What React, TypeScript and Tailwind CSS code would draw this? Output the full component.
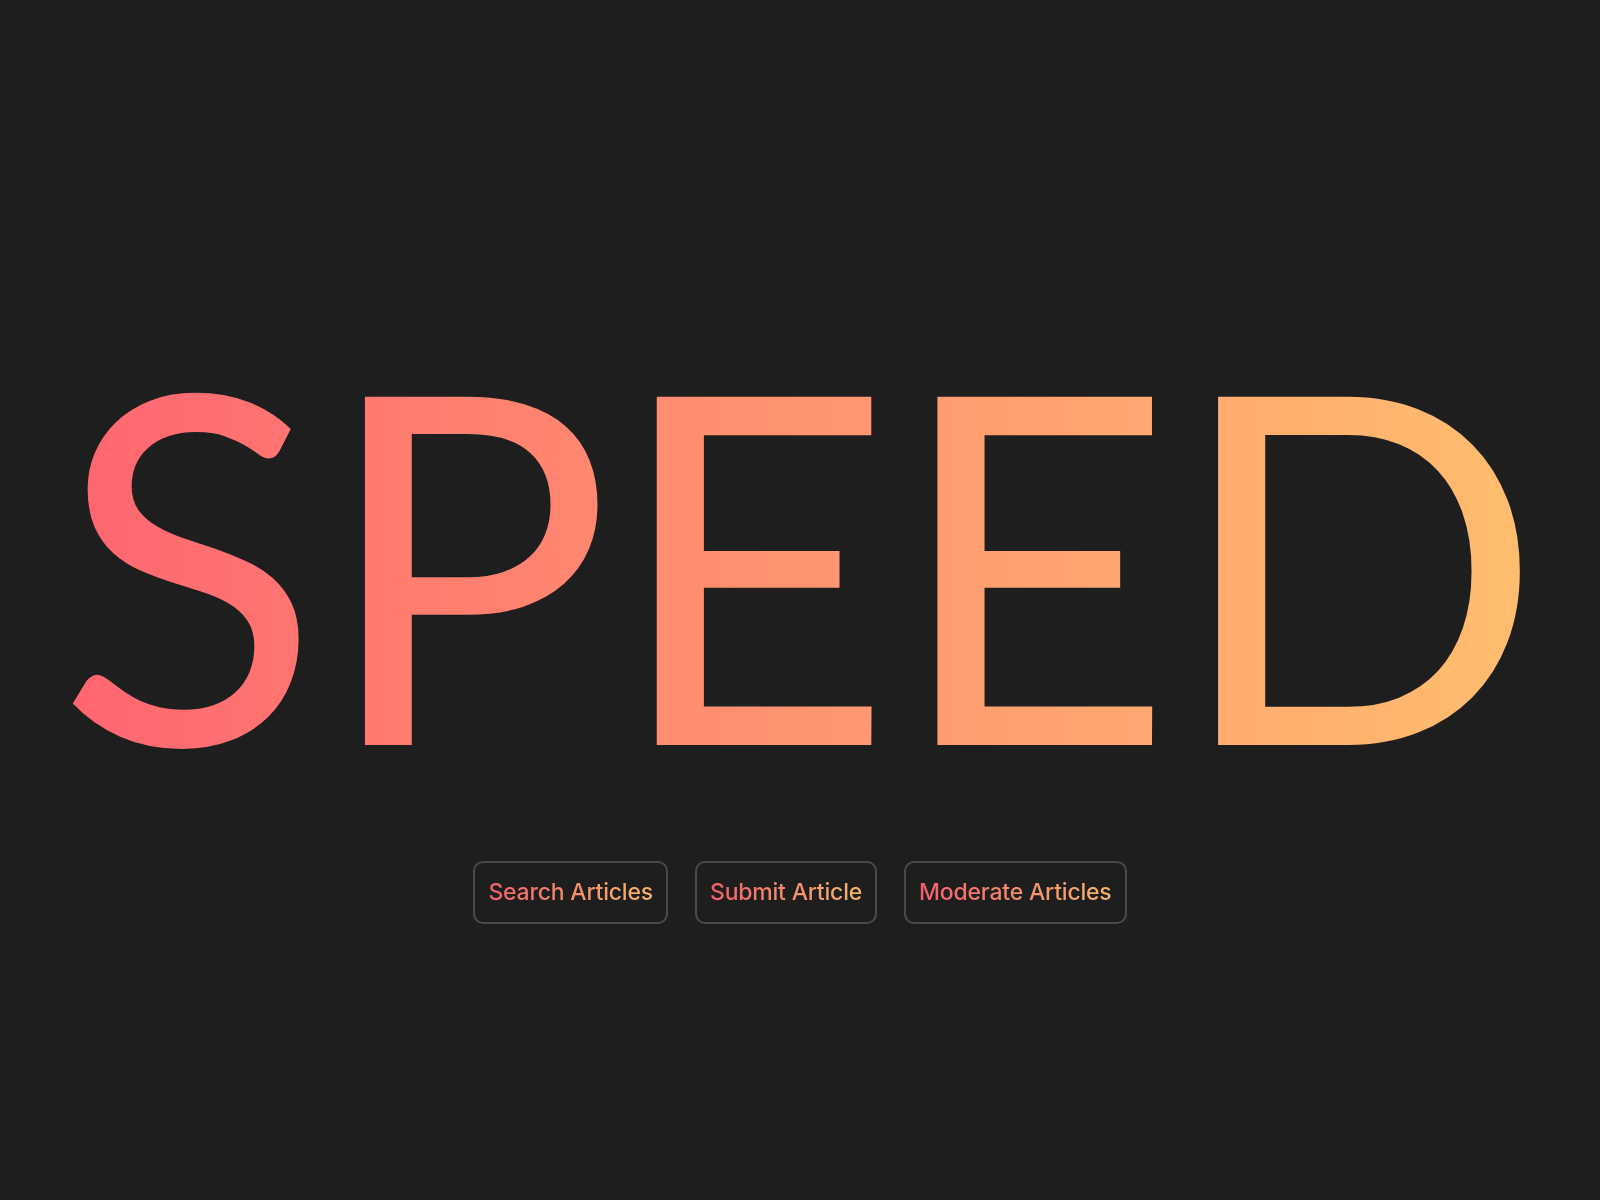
import React from "react";

const buttons = ["Search Articles", "Submit Article", "Moderate Articles"];

export default function App() {
  return (
    <div className="w-[1600px] h-[1200px] bg-[#1e1e1e] flex flex-col items-center">
      <h1
        className="mt-[314px] inline-block bg-gradient-to-r from-[#ff6470] to-[#ffbe6e] bg-clip-text text-transparent text-[486px] leading-none font-normal tracking-normal"
        style={{ fontFamily: "Lato, 'Noto Sans', sans-serif" }}
      >
        SPEED
      </h1>
      <div className="mt-[61px] flex gap-[27px]">
        {buttons.map((b) => (
          <button
            key={b}
            className="h-[63px] px-[13px] border-2 border-[#4a4a4a] rounded-[10px] bg-transparent flex items-center"
          >
            <span
              className="bg-gradient-to-r from-[#f45d6c] to-[#f5b66a] bg-clip-text text-transparent text-[23px] font-medium tracking-[-0.2px]"
              style={{ fontFamily: "Inter, 'Noto Sans', sans-serif" }}
            >
              {b}
            </span>
          </button>
        ))}
      </div>
    </div>
  );
}
